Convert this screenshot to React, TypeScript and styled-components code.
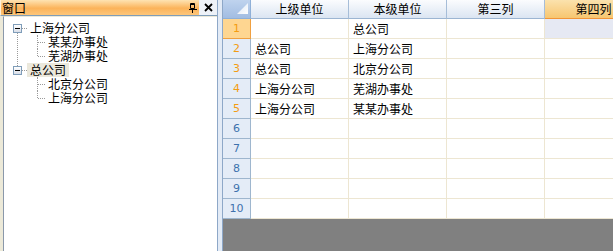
import * as React from 'react'
import styled, {createGlobalStyle, css} from 'styled-components'

const GlobalStyle = createGlobalStyle`
  html, body {
    margin: 0;
    padding: 0;
  }
  body {
    font-family: "Noto Sans CJK SC", "Liberation Sans", sans-serif;
    font-size: 12px;
    color: #000;
  }
`

const Page = styled.div`
  display: flex;
  width: 613px;
  height: 251px;
  overflow: hidden;
  background: #e3ebf6;
`

// left docked window

const LeftPane = styled.div`
  display: flex;
  flex-direction: column;
  width: 217px;
  border-right: 1px solid #8ea8c8;
  background: #ece9d8;
`

const TitleBar = styled.div`
  display: flex;
  align-items: center;
  height: 15px;
  border-left: 1px solid #fdf1dc;
  border-bottom: 1px solid #7f9db9;
  background: linear-gradient(#fee3b2, #fbb35a 55%, #fdc67a);
`

const TitleText = styled.div`
  flex: 1;
  padding-left: 1px;
  line-height: 15px;
  font-size: 12px;
`

const PinButton = styled.div`
  display: flex;
  align-items: center;
  justify-content: center;
  width: 10px;
  height: 15px;
  margin-right: 1px;
`

const CloseButton = styled.div`
  display: flex;
  align-items: center;
  justify-content: center;
  width: 18px;
  height: 15px;
  background: #eef2f8;
`

const TreeBody = styled.div`
  flex: 1;
  margin-left: 3px;
  padding-top: 4px;
  border-left: 1px solid #8a98aa;
  border-top: 1px solid #ece9d8;
  background: #fff;
`

const Group = styled.div<{continues?: boolean}>`
  position: relative;
  ${p => p.continues && css`
    &::before {
      content: '';
      position: absolute;
      left: 13px;
      top: 12px;
      bottom: -3px;
      border-left: 1px dotted #9a9a9a;
    }
  `}
`

const Row = styled.div<{level: number}>`
  display: flex;
  align-items: center;
  height: 14px;
  padding-left: ${p => p.level === 0 ? 9 : 33}px;
`

const Expander = styled.div`
  position: relative;
  box-sizing: border-box;
  width: 9px;
  height: 9px;
  border: 1px solid #7f9db9;
  background: linear-gradient(#fff, #d9dee8);

  &::after {
    content: '';
    position: absolute;
    left: 1px;
    top: 3px;
    width: 5px;
    height: 1px;
    background: #000;
  }
`

const Dash = styled.div<{width: number}>`
  width: ${p => p.width}px;
  height: 0;
  border-top: 1px dotted #9a9a9a;
`

const Branch = styled.div<{last?: boolean}>`
  position: relative;
  width: 8px;
  height: 14px;

  &::before {
    content: '';
    position: absolute;
    left: 0;
    top: 0;
    height: ${p => p.last ? 7 : 14}px;
    border-left: 1px dotted #9a9a9a;
  }

  &::after {
    content: '';
    position: absolute;
    left: 1px;
    top: 7px;
    width: 7px;
    border-top: 1px dotted #9a9a9a;
  }
`

const NodeLabel = styled.div<{selected?: boolean}>`
  padding: 0 3px;
  height: 14px;
  line-height: 14px;
  white-space: nowrap;
  background: ${p => p.selected ? '#ebe8dc' : 'transparent'};
`

const Splitter = styled.div`
  width: 4px;
  background: #e3ebf6;
`

// grid

const GridPane = styled.div`
  flex: 1;
  overflow: hidden;
  border-left: 1px solid #8ea8c8;
  background: #808080;
`

const Table = styled.div`
  display: grid;
  grid-template-columns: 28px repeat(4, 98px);
  width: max-content;
  background: #fff;
`

const Corner = styled.div`
  position: relative;
  box-sizing: border-box;
  height: 19px;
  border-right: 1px solid #8fb0d8;
  border-bottom: 1px solid #8fb0d8;
  background: linear-gradient(#bfd3ee, #a2bde2);

  svg {
    position: absolute;
    right: 2px;
    bottom: 4px;
  }
`

const HeaderCell = styled.div<{selected?: boolean}>`
  box-sizing: border-box;
  height: 19px;
  line-height: 17px;
  text-align: center;
  white-space: nowrap;
  overflow: hidden;
  border-right: 1px solid #a6bdd8;
  border-bottom: 1px solid ${p => p.selected ? '#f29536' : '#9cb5d2'};
  background: ${p => p.selected
    ? 'linear-gradient(#fbe2ad, #f7c670)'
    : 'linear-gradient(#fbfcfe, #dbe5f2)'};
`

const RowHeader = styled.div<{selected?: boolean; filled?: boolean}>`
  box-sizing: border-box;
  height: 20px;
  line-height: 19px;
  text-align: center;
  font-family: "DejaVu Sans", "Liberation Sans", sans-serif;
  font-size: 11px;
  color: ${p => p.filled ? '#f39c12' : '#3d72ad'};
  border-right: 1px solid ${p => p.selected ? '#f0a040' : '#9eb6ce'};
  border-bottom: 1px solid ${p => p.selected ? '#f0a040' : '#9eb6ce'};
  background: ${p => p.selected ? '#fed691' : '#e4ecf7'};
`

const Cell = styled.div<{selected?: boolean}>`
  box-sizing: border-box;
  height: 20px;
  padding-left: 4px;
  line-height: 19px;
  white-space: nowrap;
  overflow: hidden;
  border-right: 1px solid #ede6d2;
  border-bottom: 1px solid #ede6d2;
  background: ${p => p.selected ? '#e6e9f3' : '#fff'};
`

const columns = ['上级单位', '本级单位', '第三列', '第四列']

const rows: string[][] = [
  ['', '总公司', '', ''],
  ['总公司', '上海分公司', '', ''],
  ['总公司', '北京分公司', '', ''],
  ['上海分公司', '芜湖办事处', '', ''],
  ['上海分公司', '某某办事处', '', ''],
  ['', '', '', ''],
  ['', '', '', ''],
  ['', '', '', ''],
  ['', '', '', ''],
  ['', '', '', ''],
]

const tree = [
  {label: '上海分公司', children: ['某某办事处', '芜湖办事处']},
  {label: '总公司', selected: true, children: ['北京分公司', '上海分公司']},
]

const selRow = 0
const selCol = 3

function PinIcon() {
  return (
    <svg width="8" height="10" viewBox="0 0 8 10">
      <path d="M1.5 0.5h4v5h-4z M1.5 1.5h4" fill="none" stroke="#000" strokeWidth="1" />
      <path d="M0 6.5h8 M3.5 6.5v3.5" stroke="#000" strokeWidth="1" />
    </svg>
  )
}

function CloseIcon() {
  return (
    <svg width="9" height="9" viewBox="0 0 9 9">
      <path d="M1 1l7 7M8 1l-7 7" stroke="#000" strokeWidth="1.8" />
    </svg>
  )
}

function CornerMark() {
  return (
    <svg width="11" height="11" viewBox="0 0 11 11">
      <defs>
        <linearGradient id="cm" x1="0" y1="0" x2="1" y2="1">
          <stop offset="0" stopColor="#dbe6f5" />
          <stop offset="1" stopColor="#ffffff" />
        </linearGradient>
      </defs>
      <path d="M11 0V11H0z" fill="url(#cm)" />
    </svg>
  )
}

export default function App() {
  return (
    <Page>
      <GlobalStyle />
      <LeftPane>
        <TitleBar>
          <TitleText>窗口</TitleText>
          <PinButton><PinIcon /></PinButton>
          <CloseButton><CloseIcon /></CloseButton>
        </TitleBar>
        <TreeBody>
          {tree.map((node, i) => (
            <Group key={node.label} continues={i < tree.length - 1}>
              <Row level={0}>
                <Expander />
                <Dash width={5} />
                <NodeLabel selected={node.selected}>{node.label}</NodeLabel>
              </Row>
              {node.children.map((child, j) => (
                <Row key={child} level={1}>
                  <Branch last={j === node.children.length - 1} />
                  <NodeLabel>{child}</NodeLabel>
                </Row>
              ))}
            </Group>
          ))}
        </TreeBody>
      </LeftPane>
      <Splitter />
      <GridPane>
        <Table>
          <Corner><CornerMark /></Corner>
          {columns.map((c, ci) => (
            <HeaderCell key={c} selected={ci === selCol}>{c}</HeaderCell>
          ))}
          {rows.map((r, ri) => (
            <React.Fragment key={ri}>
              <RowHeader selected={ri === selRow} filled={ri < 5}>{ri + 1}</RowHeader>
              {r.map((v, ci) => (
                <Cell key={ci} selected={ri === selRow && ci === selCol}>{v}</Cell>
              ))}
            </React.Fragment>
          ))}
        </Table>
      </GridPane>
    </Page>
  )
}
